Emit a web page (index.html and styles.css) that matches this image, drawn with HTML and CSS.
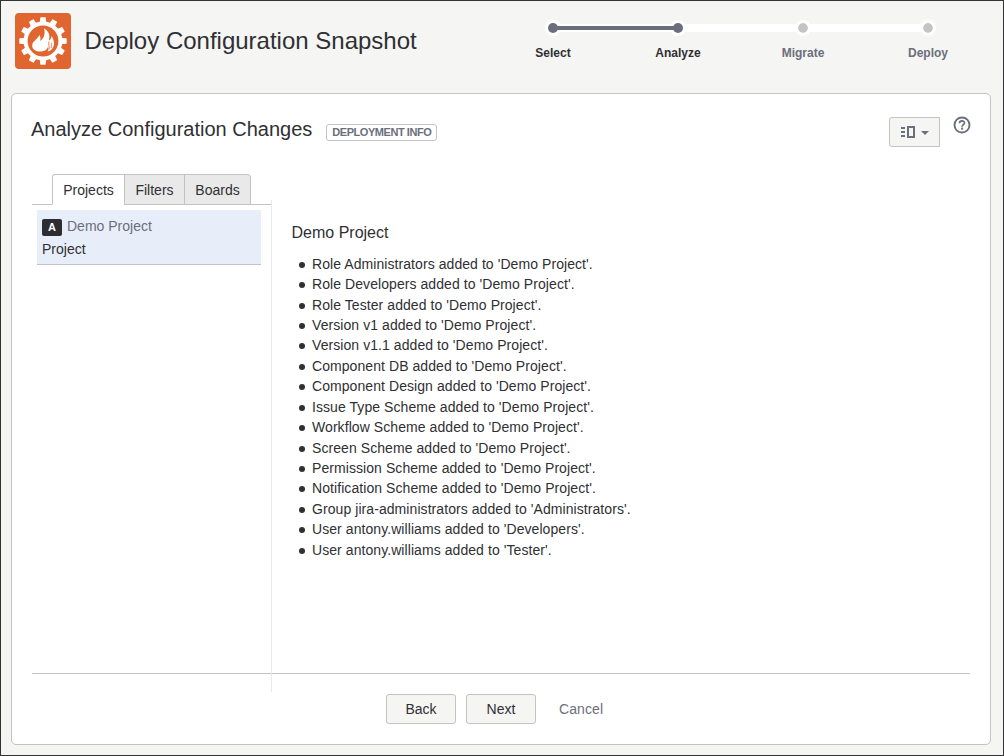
FILE: index.html
```html
<!DOCTYPE html>
<html lang="en">
<head>
<meta charset="utf-8">
<title>Deploy Configuration Snapshot</title>
<link rel="stylesheet" href="styles.css">
</head>
<body>
<div class="app">
  <header class="header">
    <svg class="logo" width="56" height="56" viewBox="0 0 56 56">
      <rect width="56" height="56" rx="4" fill="#e0652f"/>
      <g fill="#fff">
        <g id="teeth"><path id="t" d="M24.700 10.500L25.300 4.800Q25.400 4.300 26 4.300H30Q30.600 4.300 30.700 4.800L31.300 10.500Z"/>
          <use href="#t" transform="rotate(30 28 28)"/><use href="#t" transform="rotate(60 28 28)"/>
          <use href="#t" transform="rotate(90 28 28)"/><use href="#t" transform="rotate(120 28 28)"/>
          <use href="#t" transform="rotate(150 28 28)"/></g>
        <use href="#teeth" transform="rotate(180 28 28)"/>
      </g>
      <circle cx="28" cy="28" r="17.400" fill="none" stroke="#fff" stroke-width="4"/>
      <path fill="#fff" d="M29 15.200C34 18.300 35.500 23 33.800 27.500C36 26.500 36.500 24.800 36.300 23C39 26.500 40 31 38 34.500C36.800 36.700 35 38 32.500 38.600C33.700 37 33.600 35.400 33 34C32 37 29 38.500 25 38.500C20 38.500 17.200 36 17.200 32.500C17.200 28.500 22.200 26.500 24.500 22C25.800 24.300 25.700 26 25 28C29 25.500 30.500 20.500 29 15.200Z"/>
      <path fill="none" stroke="#e0652f" stroke-width=".8" d="M34 28.500C33 31 34.800 33 34 36.500M36.500 30C36 32 37 33 36 35"/>
    </svg>
    <h1 class="title">Deploy Configuration Snapshot</h1>
    <ol class="steps">
      <li class="step done"><span class="dot"></span>Select</li>
      <li class="step current"><span class="dot"></span>Analyze</li>
      <li class="step todo"><span class="dot"></span>Migrate</li>
      <li class="step todo"><span class="dot"></span>Deploy</li>
    </ol>
  </header>
  <main class="panel">
    <div class="panel-head">
      <h2 class="heading">Analyze Configuration Changes</h2>
      <span class="lozenge">DEPLOYMENT INFO</span>
      <button class="view-button">
        <svg width="30" height="14" viewBox="0 0 30 14">
          <path d="M1 3H5M1 7H5M1 11H5" stroke="#6b6f7b" stroke-width="2"/>
          <path d="M8 2H14V12H8Z" fill="none" stroke="#6b6f7b" stroke-width="2"/>
          <path d="M21 6H29L25 10Z" fill="#6b6f7b"/>
        </svg>
      </button>
      <svg class="help" width="18" height="18" viewBox="0 0 18 18">
        <circle cx="9" cy="9" r="7.500" fill="none" stroke="#6b6f7b" stroke-width="1.900"/>
        <path d="M6.500 7.200C6.500 4 11.500 4.200 11.500 6.900C11.500 8.700 9.100 8.600 9.100 10.700" fill="none" stroke="#6b6f7b" stroke-width="1.700"/>
        <rect x="8.100" y="11.600" width="2" height="2" fill="#6b6f7b"/>
      </svg>
    </div>
    <div class="content">
      <aside class="sidebar">
        <nav class="tabs">
          <span class="tab active">Projects</span><span class="tab">Filters</span><span class="tab">Boards</span>
        </nav>
        <div class="item">
          <div class="item-name"><span class="badge">A</span>Demo Project</div>
          <div class="item-type">Project</div>
        </div>
      </aside>
      <section class="details">
        <h3 class="details-title">Demo Project</h3>
        <ul class="changes">
          <li>Role Administrators added to 'Demo Project'.</li>
          <li>Role Developers added to 'Demo Project'.</li>
          <li>Role Tester added to 'Demo Project'.</li>
          <li>Version v1 added to 'Demo Project'.</li>
          <li>Version v1.1 added to 'Demo Project'.</li>
          <li>Component DB added to 'Demo Project'.</li>
          <li>Component Design added to 'Demo Project'.</li>
          <li>Issue Type Scheme added to 'Demo Project'.</li>
          <li>Workflow Scheme added to 'Demo Project'.</li>
          <li>Screen Scheme added to 'Demo Project'.</li>
          <li>Permission Scheme added to 'Demo Project'.</li>
          <li>Notification Scheme added to 'Demo Project'.</li>
          <li>Group jira-administrators added to 'Administrators'.</li>
          <li>User antony.williams added to 'Developers'.</li>
          <li>User antony.williams added to 'Tester'.</li>
        </ul>
      </section>
    </div>
    <footer class="footer">
      <button class="button">Back</button>
      <button class="button">Next</button>
      <a class="cancel">Cancel</a>
    </footer>
  </main>
</div>
</body>
</html>
```
FILE: styles.css
```css
* { box-sizing: border-box; }
body {
  margin: 0;
  font: 14px/20px "Liberation Sans", Arial, sans-serif;
  color: #2f3033;
}
h1, h2, h3, ul, ol { margin: 0; padding: 0; font-weight: 400; }
button { font: inherit; color: inherit; padding: 0; }
.app {
  width: 1004px;
  height: 756px;
  border: 1px solid #333;
  background: #f5f5f4;
  padding: 0 12px 10px 10px;
  display: flex;
  flex-direction: column;
}
.header {
  height: 92px;
  flex: none;
  display: flex;
  align-items: flex-start;
  padding: 12px 0 0 4px;
}
.title { font-size: 24px; line-height: 28px; margin: 14px 0 0 13.5px; white-space: nowrap; }
.logo { flex: none; }
.steps { display: flex; list-style: none; margin: 7px .5px 0 auto; }
.step {
  width: 125px;
  display: flex;
  flex-direction: column;
  align-items: center;
  gap: 9px;
  font-size: 12px;
  line-height: 17px;
  font-weight: 700;
  position: relative;
}
.step.todo { color: #6b6f7b; }
.dot {
  width: 16px;
  height: 16px;
  border: 3px solid #fff;
  border-radius: 50%;
  background: #6b6f7b;
  background-clip: padding-box;
  z-index: 3;
}
.todo .dot { background-color: #c4c4c4; }
/* connector to the following step */
.step:not(:last-child)::after {
  content: "";
  position: absolute;
  left: 62px;
  top: 4px;
  width: 125px;
  height: 8px;
  background: #fff;
}
.step.done::after {
  top: 6px;
  height: 4px;
  background: #6b6f7b;
  box-shadow: 0 -2px #fff, 0 2px #fff;
  z-index: 4;
}
.step.done .dot, .step.current .dot { z-index: 5; border: 0; width: 10px; height: 10px; margin: 3px; box-shadow: none; }
/* white halo beneath the connector */
.step.done::before, .step.current::before {
  content: "";
  position: absolute;
  top: 0;
  left: 54.5px;
  width: 16px;
  height: 16px;
  border-radius: 50%;
  background: #fff;
  z-index: 1;
}
.panel {
  flex: 1;
  border: 1px solid #c3c3c5;
  border-radius: 5px;
  background: #fff;
  padding: 0 20px;
  display: flex;
  flex-direction: column;
}
.panel-head { display: flex; align-items: flex-start; height: 80px; flex: none; }
.heading { font-size: 20px; line-height: 28px; margin: 21px 0 0 -1px; white-space: nowrap; }
.lozenge {
  margin: 30px 0 0 14px;
  width: 111px;
  height: 17px;
  border: 1px solid #c3c3c8;
  border-radius: 3px;
  font-size: 11px;
  letter-spacing: -.45px;
  line-height: 15px;
  font-weight: 700;
  color: #6b6f7b;
  text-align: center;
  white-space: nowrap;
}
.view-button {
  margin: 23px 0 0 auto;
  width: 51px;
  height: 30px;
  border: 1px solid #c3c3c3;
  border-radius: 3px 0 0 3px;
  background: #f5f5f4;
  display: flex;
  align-items: center;
  justify-content: center;
}
.help { margin: 22px -1px 0 13px; }
.content { display: flex; flex: 1; }
.sidebar { width: 240px; position: relative; }
.sidebar::after {
  content: "";
  position: absolute;
  right: 0;
  top: 26px;
  height: 492px;
  border-right: 1px solid #e9e9ec;
}
.tabs { display: flex; height: 31px; padding-left: 20px; border-bottom: 1px solid #c3c3c5; }
.tab {
  height: 31px;
  width: 61px;
  margin-left: -1px;
  border: 1px solid #c3c3c5;
  background: #e9e9ea;
  line-height: 30px;
  text-align: center;
}
.tab.active { width: 73px; margin-left: 0; background: #fff; border-bottom-color: #fff; border-radius: 3px 0 0 0; }
.tab:last-child { width: 67px; border-radius: 0 3px 0 0; }
.item {
  margin: 5px 0 0 5px;
  width: 224px;
  height: 55px;
  padding: 6px 5px;
  background: #e8eef9;
  border-bottom: 1px solid #c3c3c5;
}
.item-name { display: flex; gap: 5px; color: #6b6f7b; }
.badge {
  width: 20px;
  height: 17px;
  margin-top: 3px;
  border-radius: 2px;
  background: #2d2e33;
  color: #fff;
  font-size: 11px;
  font-weight: 700;
  line-height: 17px;
  text-align: center;
}
.item-type { margin-top: 3px; }
.details { padding: 49px 0 0 20px; }
.details-title { font-size: 16px; line-height: 20px; margin-left: -.5px; }
.changes {
  margin-top: 10.8px;
  padding-left: 20px;
  line-height: 20.42px;
  letter-spacing: .07px;
  white-space: nowrap;
  list-style: none;
}
.changes li::before {
  content: "";
  float: left;
  width: 6px;
  height: 6px;
  margin: 8px 0 0 -13px;
  border-radius: 50%;
  background: #2f3033;
}
.footer {
  height: 71px;
  border-top: 1px solid #c3c3c5;
  padding: 20px 0 0 354px;
  display: flex;
  align-items: flex-start;
  gap: 10px;
}
.button {
  width: 70px;
  height: 30px;
  border: 1px solid #c3c3c3;
  border-radius: 3px;
  background: #f5f5f4;
}
.cancel { color: #6b6f7b; margin: 5px 0 0 13px; letter-spacing: .1px; }
```
